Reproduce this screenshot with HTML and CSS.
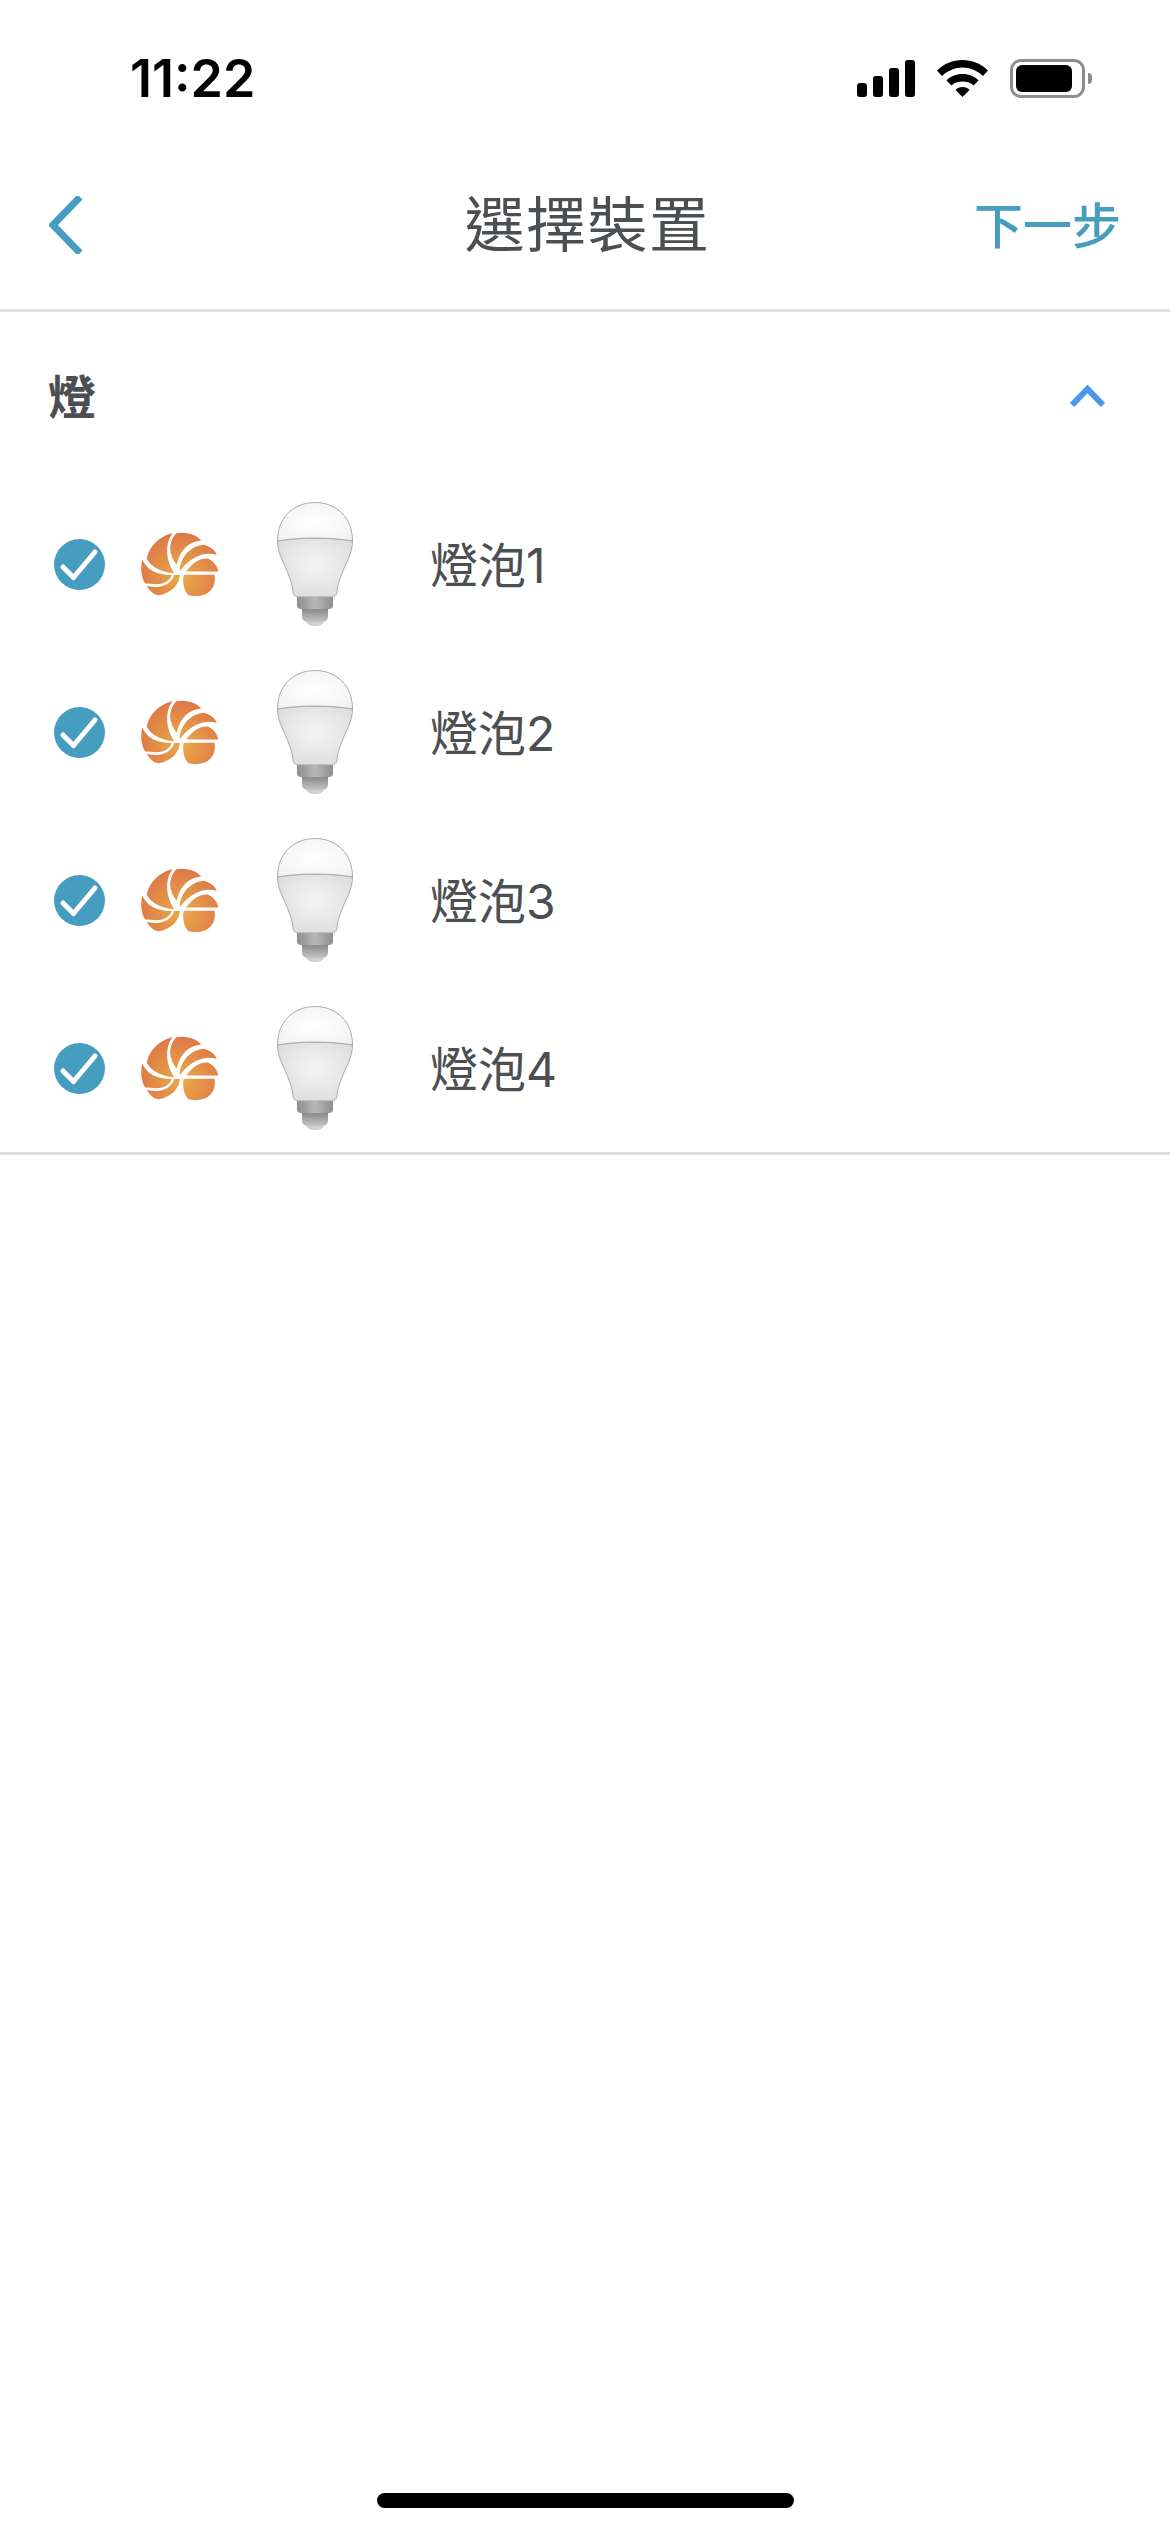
FILE: index.html
```html
<!DOCTYPE html>
<html lang="zh-Hant">
<head>
  <meta charset="UTF-8">
  <title>選擇裝置</title>
  <link rel="stylesheet" href="styles.css">
</head>
<body>

<!-- shared drawings for the rows -->
<svg class="defs" aria-hidden="true">
  <defs>
    <radialGradient id="logoFill" gradientUnits="userSpaceOnUse" cx="455" cy="285" r="125">
      <stop offset="0" stop-color="#e9ab4a"/>
      <stop offset="1" stop-color="#de7b47"/>
    </radialGradient>
    <radialGradient id="domeFill" cx="0.5" cy="0.5" r="0.6">
      <stop offset="0" stop-color="#ffffff"/>
      <stop offset="1" stop-color="#f3f3f3"/>
    </radialGradient>
    <radialGradient id="bodyFill" cx="0.5" cy="0.45" r="0.6">
      <stop offset="0" stop-color="#f4f4f4"/>
      <stop offset="1" stop-color="#dddede"/>
    </radialGradient>
    <linearGradient id="collarFill" x1="0" x2="1" y1="0" y2="0">
      <stop offset="0" stop-color="#8e8e8e"/>
      <stop offset="0.5" stop-color="#b8b8b8"/>
      <stop offset="1" stop-color="#8e8e8e"/>
    </linearGradient>
    <linearGradient id="capFill" x1="0" x2="0" y1="0" y2="1">
      <stop offset="0" stop-color="#8a8a8a"/>
      <stop offset="1" stop-color="#c4c4c4"/>
    </linearGradient>
    <symbol id="logo" viewBox="333 154 236 195">
      <g fill="url(#logoFill)">
        <path d="M428 157C385 168 355 200 350 236C365 262 395 277 434 279C410 245 402 195 428 157Z"/>
        <path d="M439 158C465 152 500 160 516 180C480 183 452 205 441 254C418 225 412 190 439 158Z"/>
        <path d="M522 193C540 197 556 207 563 223C520 212 480 232 450 274C450 235 480 198 522 193Z"/>
        <path d="M568 274H470C487 250 515 230 540 236C555 245 565 260 568 274Z"/>
        <path d="M462 284H556C561 310 550 335 525 345C505 350 485 350 475 345C462 330 458 305 462 284Z"/>
        <path d="M433 285H451C448 310 430 340 385 347C370 345 357 332 350 318C395 330 427 310 433 285Z"/>
        <path d="M336 238C350 270 380 285 426 285C420 302 400 318 365 312C355 311 350 311 345 311C332 290 330 265 336 238Z"/>
      </g>
    </symbol>
    <symbol id="bulb" viewBox="0 0 76 124">
      <path fill="url(#bodyFill)" stroke="#aaaaaa" d="M0.5 39C12 37 25 36 38 36C51 36 64 37 75.5 39C75.5 52 68 62 64 74C61 82 60 87 60 91C60 93 57 95 54 95H22C19 95 16 93 16 91C16 87 15 82 12 74C8 62 0.5 52 0.5 39Z"/>
      <path fill="url(#domeFill)" stroke="#aaaaaa" d="M0.5 39C0.5 15 17 0.5 38 0.5C59 0.5 75.5 15 75.5 39C64 37 51 36 38 36C25 36 12 37 0.5 39Z"/>
      <path fill="url(#collarFill)" d="M20 95H56V104C56 106 54 107 52 107H24C22 107 20 106 20 104Z"/>
      <path fill="url(#capFill)" d="M25 107H51V115C51 118 48 120 45 120H31C28 120 25 118 25 115Z"/>
      <path fill="#d0d0d0" d="M29 120H47C45 123 42 124 38 124C34 124 31 123 29 120Z"/>
    </symbol>
    <symbol id="check" viewBox="0 0 51 51">
      <circle cx="25.5" cy="25.5" r="25.5" fill="#479dbf"/>
      <path d="M9 28L19.5 38.5L41 13" fill="none" stroke="#fff" stroke-width="5" stroke-linecap="round" stroke-linejoin="round"/>
    </symbol>
  </defs>
</svg>

<div class="statusBar">
  <span class="time">11:22</span>
  <div class="statusIcons">
    <div class="signal">
      <span class="bar bar1"></span>
      <span class="bar bar2"></span>
      <span class="bar bar3"></span>
      <span class="bar bar4"></span>
    </div>
    <svg class="wifi" width="51" height="37" viewBox="0 0 51 37">
      <path d="M0 10.5C7 3.5 16 0 25.5 0C35 0 44 3.5 51 10.5L46 16C40 10.5 33 7.5 25.5 7.5C18 7.5 11 10.5 5 16Z"/>
      <path d="M9.5 20.5C13 16.5 19 14 25.5 14C32 14 38 16.5 41.5 20.5L36.5 25.5C34 23 30 21.5 25.5 21.5C21 21.5 17 23 14.5 25.5Z"/>
      <path d="M18.5 30C20 28 22.5 27 25.5 27C28.5 27 31 28 32.5 30L25.5 37Z"/>
    </svg>
    <div class="battery">
      <div class="batteryCase"><div class="batteryLevel"></div></div>
      <div class="batteryNub"></div>
    </div>
  </div>
</div>

<div class="navBar">
  <svg class="back" width="34" height="58" viewBox="0 0 34 58">
    <path d="M31 1L4 29L31 57" fill="none" stroke="#479dbf" stroke-width="7"/>
  </svg>
  <h1 class="title">選擇裝置</h1>
  <span class="next">下一步</span>
</div>

<div class="section">
  <div class="sectionHead">
    <span class="sectionName">燈</span>
    <svg class="collapse" width="35" height="22" viewBox="0 0 35 22">
      <path d="M2 20L17.5 4L33 20" fill="none" stroke="#4a97ee" stroke-width="6"/>
    </svg>
  </div>

  <div class="deviceRow">
    <svg class="checkIcon"><use href="#check"/></svg>
    <svg class="logoIcon"><use href="#logo"/></svg>
    <svg class="bulbIcon"><use href="#bulb"/></svg>
    <span class="deviceName">燈泡1</span>
  </div>
  <div class="deviceRow">
    <svg class="checkIcon"><use href="#check"/></svg>
    <svg class="logoIcon"><use href="#logo"/></svg>
    <svg class="bulbIcon"><use href="#bulb"/></svg>
    <span class="deviceName">燈泡2</span>
  </div>
  <div class="deviceRow">
    <svg class="checkIcon"><use href="#check"/></svg>
    <svg class="logoIcon"><use href="#logo"/></svg>
    <svg class="bulbIcon"><use href="#bulb"/></svg>
    <span class="deviceName">燈泡3</span>
  </div>
  <div class="deviceRow">
    <svg class="checkIcon"><use href="#check"/></svg>
    <svg class="logoIcon"><use href="#logo"/></svg>
    <svg class="bulbIcon"><use href="#bulb"/></svg>
    <span class="deviceName">燈泡4</span>
  </div>
</div>

<div class="homeBar"></div>

</body>
</html>
```

FILE: styles.css
```css
html, body {
  margin: 0;
  height: 2532px;
}

body {
  display: flex;
  flex-direction: column;
  overflow: hidden;
  background-color: #fff;
  color: #4c4f52;
  font-family: "Liberation Sans", "Noto Sans CJK TC", sans-serif;
}

.defs {
  display: block;
  width: 0;
  height: 0;
}

.statusBar {
  display: flex;
  justify-content: space-between;
  align-items: center;
  height: 154px;
  padding: 2px 78px 0 130px;
  box-sizing: border-box;
}

.time {
  color: #000;
  font-family: Inter, sans-serif;
  font-size: 52px;
  font-weight: 600;
}

.statusIcons {
  display: flex;
  align-items: center;
  gap: 22px;
}

.signal {
  display: flex;
  align-items: flex-end;
  gap: 6px;
  height: 37px;
}

.bar {
  width: 10px;
  background-color: #000;
  border-radius: 3px;
}

.bar1 { height: 14px; }
.bar2 { height: 21px; }
.bar3 { height: 29px; }
.bar4 { height: 37px; }

.wifi {
  display: block;
}

.battery {
  display: flex;
  align-items: center;
  gap: 3px;
}

.batteryCase {
  width: 75px;
  height: 39px;
  padding: 3px;
  box-sizing: border-box;
  border: 3px solid #8e8e8e;
  border-radius: 11px;
}

.batteryLevel {
  width: 56px;
  height: 27px;
  background-color: #000;
  border-radius: 6px;
}

.batteryNub {
  width: 4px;
  height: 11px;
  background-color: #8e8e8e;
  border-radius: 0 4px 4px 0;
}

.navBar {
  display: grid;
  grid-template-columns: 1fr auto 1fr;
  align-items: center;
  height: 141px;
  padding: 0 49px 14px 48px;
  border-bottom: 3px solid #e0e0e0;
}

.back {
  display: block;
  margin-left: 1px;
}

.title {
  margin: 0 0 8px 6px;
  font-size: 60px;
  font-weight: 400;
  letter-spacing: 1.5px;
  color: #4c4f52;
}

.next {
  justify-self: end;
  padding-bottom: 4px;
  color: #479dbf;
  font-size: 49px;
  font-weight: 500;
}

.section {
  border-bottom: 3px solid #dddddd;
}

.sectionHead {
  display: flex;
  justify-content: space-between;
  align-items: center;
  height: 168px;
  padding: 0 65px 0 48px;
}

.sectionName {
  font-size: 48px;
  font-weight: 700;
  position: relative;
  top: -2px;
}

.collapse {
  display: block;
}

.deviceRow {
  display: flex;
  align-items: center;
  height: 168px;
  padding-left: 54px;
}

.checkIcon {
  width: 51px;
  height: 51px;
  margin-right: 36px;
}

.logoIcon {
  width: 78px;
  height: 64px;
  margin-right: 58px;
}

.bulbIcon {
  width: 76px;
  height: 124px;
  margin-right: 77px;
}

.deviceName {
  font-family: Inter, "Noto Sans CJK TC", sans-serif;
  font-size: 48px;
  font-weight: 400;
  padding-bottom: 5px;
}

.homeBar {
  width: 417px;
  height: 15px;
  margin: auto auto 24px;
  background-color: #000;
  border-radius: 8px;
}
```
